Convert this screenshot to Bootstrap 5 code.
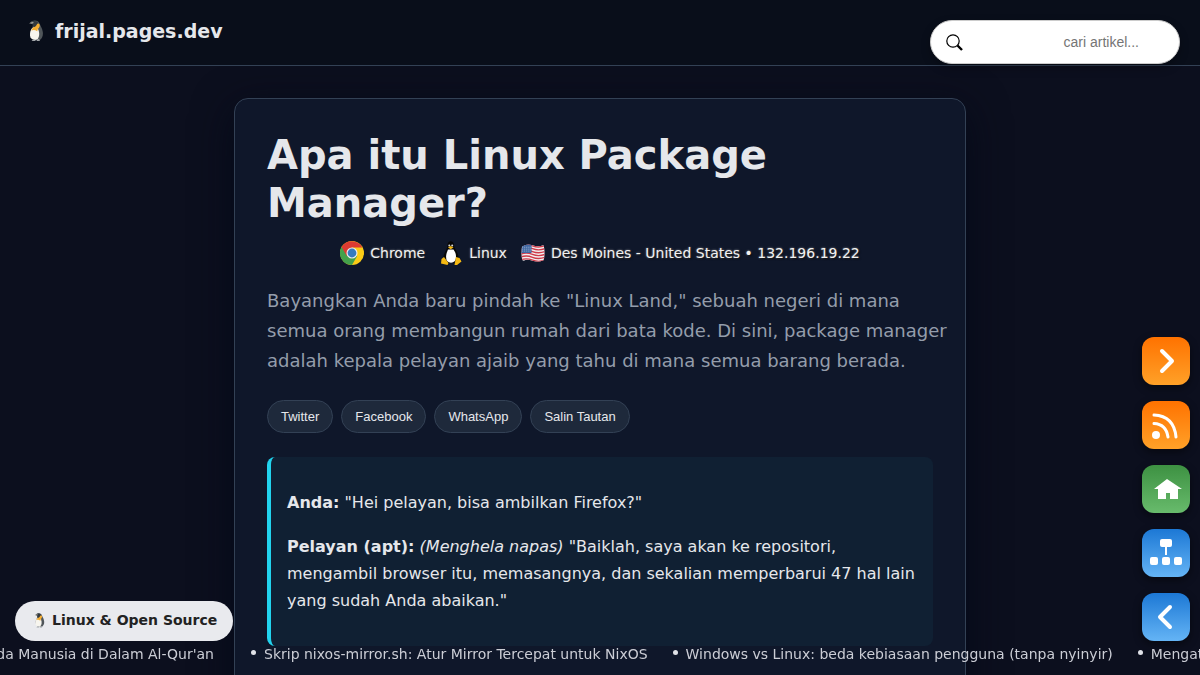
<!DOCTYPE html>
<html lang="id">
<head>
<meta charset="utf-8">
<meta name="viewport" content="width=device-width, initial-scale=1">
<title>Apa itu Linux Package Manager?</title>
<link href="https://cdn.jsdelivr.net/npm/bootstrap@5.3.0/dist/css/bootstrap.min.css" rel="stylesheet">
<style>
html{scrollbar-width:none}
html::-webkit-scrollbar{display:none}
body{background:#0c0f1e;color:#e5e7eb;font:16px/27px "DejaVu Sans",sans-serif;min-height:100vh}
.site-head{min-height:66px;background:#090e1a;border-bottom:1px solid #334155;padding:0 20px 0 24px;position:relative;z-index:2}
.brand-link{font-size:19px;line-height:28px;padding-top:17px;gap:7px;color:#e5e7eb}
.search-box{width:250px;height:44px;margin-top:20px;background:#fff;border:1px solid #ccc;padding:0 26px 0 15px;box-shadow:0 4px 10px #0004}
.search-box input{font:14px "Liberation Sans",sans-serif;text-align:right;color:#222;background:none;outline:0;min-width:0}
.search-box input::placeholder{color:#757575;opacity:1}
.article-box{max-width:732px;margin:32px auto 0;padding:32px 32px 80px;background:#0f172a;border:1px solid #334155;border-radius:14px;box-shadow:0 10px 40px #020817c0}
h1{font-size:40px;line-height:48px;font-weight:700;color:#e5e7eb}
.visitor{font-size:14px;line-height:24px;gap:14px;margin-top:14px;color:#f1f1f1;text-shadow:1px 1px 2px #000,0 0 2px #fffa}
.visitor span{gap:6px}
.intro{font-size:18px;line-height:30px;color:#949dab;margin:21px -16px 24px 0}
.share-btn{font:13px/15px "Liberation Sans",sans-serif;color:#e5e7eb;background:#1e293b;border:1px solid #334155;padding:8px 13px;height:33px}
.dialog{margin:24px 0 0;padding:32px 16px;border-left:4px solid #22d3ee;border-radius:8px;background:#102033}
.dialog p{margin:0 0 17px}
.dialog p:last-child{margin:0}
.side-tools{right:10px;bottom:34px;gap:16px;z-index:5}
.tool{width:48px;height:48px;border-radius:12px;box-shadow:0 3px 8px #0007}
.t-orange{background:linear-gradient(#ff7200,#ffa128)}
.t-green{background:linear-gradient(#3d9142,#68bb6c)}
.t-blue{background:linear-gradient(#1c78d5,#64b4f5)}
.topic{left:15px;bottom:34px;height:40px;padding:0 16px 2px;gap:4px;font-size:14px;font-weight:700;color:#222;background:#e9eaee;z-index:5}
.ticker{bottom:7px;font-size:14px;line-height:28px;gap:25px;z-index:4}
.ticker li{flex:none}
.ticker li:first-child{width:214px;margin-right:12px}
.ticker a{color:#cbcdd5}
.dot{width:5px;height:5px;border-radius:50%;background:#e0e2e8;margin:0 8px 3px 0}
</style>
</head>
<body>
<svg class="d-none" aria-hidden="true">
<symbol id="penguin" viewBox="0 0 16 22"><path d="M2 2.800C4.500-.5 10.500-.3 11.800 4c.8 2.500 2.500 4 3 8 .5 4-.8 6.500-3 8L5 19C1.500 16 1.800 11 4 8 5 6.500 4.800 5 4.800 4Z" fill="#50565a"/><path d="M3.500 9C5 7 8.500 6.500 10 9c2 4 1.300 8.500-.8 10.500-2 1-5.500.3-6.700-2C1.500 15 2 11.500 3.500 9Z" fill="#f7f5ee"/><path d="M4.400 8.500C6 7 6.800 4.500 9.500 3.500c2-.3 2.700 1.500 2 3.200-.5 1.500-1.800 1.800-2.300 4.500C7.500 10 5.500 9.500 3.500 10.500Z" fill="#f6ae32"/><path d="M3.500 2c2.500-2 6.500-1 6.500 1C8.500 4 8.500 6.500 6.500 7 4.800 7.300 5.500 4.500 3.800 3.500Z" fill="#33393e"/><path d="m1 3.200 3.500-1.200 1.500.8-2 .9Z" fill="#a9a7a0"/><path d="m5 19.500-1.500 1.600h4L7.500 19.800Zm4 0-.5 1.600h3.500l-1-2Z" fill="#a2a6a9"/></symbol>
</svg>
<header class="site-head d-flex justify-content-between align-items-start">
<a href="#" class="brand-link d-flex align-items-center fw-bold text-decoration-none"><svg width="24" height="22"><use href="#penguin"/></svg>frijal.pages.dev</a>
<form class="search-box d-flex align-items-center rounded-pill" role="search">
<button type="button" class="border-0 bg-transparent p-0 d-flex" aria-label="Cari"><svg width="17" height="17" viewBox="0 0 17 17" fill="none" stroke="#000"><circle cx="7" cy="7" r="6.200" stroke-width="1.200"/><path d="m11.500 11.500 4.500 4.500" stroke-width="2.400"/></svg></button>
<input type="search" class="border-0 p-0 flex-grow-1" placeholder="cari artikel..." aria-label="Cari artikel">
</form>
</header>
<main>
<article class="article-box">
<h1 class="m-0">Apa itu Linux Package Manager?</h1>
<div class="visitor d-flex justify-content-center flex-wrap">
<span class="d-flex"><svg width="24" height="24" viewBox="0 0 24 24"><circle cx="12" cy="12" r="12" fill="#fbcc16"/><path d="M1.600 6A12 12 0 0 0 12 24l5.200-9L12 12 4 6Z" fill="#43a14b"/><path d="M1.600 6A12 12 0 0 1 22.400 6.500H12L6.800 15Z" fill="#dd3b32"/><circle cx="12" cy="12" r="5.500" fill="#eee"/><circle cx="12" cy="12" r="4.400" fill="#347bc0"/></svg>Chrome</span>
<span class="d-flex"><svg width="24" height="24" viewBox="0 0 24 24"><path d="M8.500 4c0-5 6.500-5 6.500 0 0 4 4.500 7 4.500 13 0 3-3 5-7.500 5s-7.500-2-7.500-5C4.500 11 8.500 9 8.500 4Z" fill="#080808"/><path d="M9 8.500h5.500C17 12 17.500 15 16.500 19c-2 3.500-7 3.500-9 0-1-4 0-7 1.500-10.500Z" fill="#fff"/><circle cx="10.300" cy="4.500" r="1" fill="#ddd"/><circle cx="13.200" cy="4.500" r="1" fill="#ddd"/><path d="m9 6.500 2.700-1.500 2.800 1.500-2.800 1.800Z" fill="#f5b913"/><path d="M2.500 18 5 16l4.500 6-1 2-6.500-1.500ZM17 16l3.500 1 2 3.500-4.500 3.500h-2.500Z" fill="#f5b913"/></svg>Linux</span>
<span class="d-flex"><svg width="24" height="24" viewBox="0 0 25 24"><clipPath id="wave"><path d="M2 5Q6 2 12 4T23 4Q24 4 24 6 25 12 24 18 24 20 22 20 18 22 12 20T3 20Q1 20 1 18 0 12 1 6 1 5 2 5Z"/></clipPath><g clip-path="url(#wave)"><path fill="#f3eff0" d="M0 0h25v24H0z"/><path d="M0 4Q6 2 12 4.500T25 4.500M0 7Q6 5 12 7.500T25 7.500M0 10Q6 8 12 10.500T25 10.500M0 13Q6 11 12 13.500T25 13.500M0 16Q6 14 12 16.500T25 16.500M0 19Q6 17 12 19.500T25 19.500" fill="none" stroke="#cf3b4b" stroke-width="1.500"/><path fill="#4168a2" d="M0 3h11v9H0z"/><path d="M1 6h9M1 8h9M1 10h9" stroke="#c5d2e4" stroke-width=".7" stroke-dasharray="1 1"/></g></svg>Des Moines - United States • 132.196.19.22</span>
</div>
<p class="intro">Bayangkan Anda baru pindah ke "Linux Land," sebuah negeri di mana semua orang membangun rumah dari bata kode. Di sini, package manager adalah kepala pelayan ajaib yang tahu di mana semua barang berada.</p>
<div class="d-flex flex-wrap gap-2">
<button type="button" class="share-btn rounded-pill">Twitter</button>
<button type="button" class="share-btn rounded-pill">Facebook</button>
<button type="button" class="share-btn rounded-pill">WhatsApp</button>
<button type="button" class="share-btn rounded-pill">Salin Tautan</button>
</div>
<blockquote class="dialog">
<p><strong>Anda:</strong> "Hei pelayan, bisa ambilkan Firefox?"</p>
<p><strong>Pelayan (apt):</strong> <em>(Menghela napas)</em> "Baiklah, saya akan ke repositori, mengambil browser itu, memasangnya, dan sekalian memperbarui 47 hal lain yang sudah Anda abaikan."</p>
</blockquote>
</article>
</main>
<nav class="side-tools position-fixed d-flex flex-column" aria-label="Pintasan">
<a href="#" class="tool t-orange" aria-label="Berikutnya"><svg width="48" height="48" fill="none" stroke="#fff" stroke-width="4" stroke-linecap="round" stroke-linejoin="round"><path d="m20 14 10 10-10 10"/></svg></a>
<a href="#" class="tool t-orange" aria-label="RSS"><svg width="48" height="48" fill="none" stroke="#fff" stroke-width="3" stroke-linecap="round"><circle cx="14" cy="34" r="4" fill="#fff" stroke="none"/><path d="M12 22.500Q24 23 26 36M12 14Q32 15 34 36"/></svg></a>
<a href="#" class="tool t-green" aria-label="Beranda"><svg width="48" height="48" fill="#fff"><path d="m25 14 15 10h-4v10h-8v-6h-4v6h-8V24h-4Z"/></svg></a>
<a href="#" class="tool t-blue" aria-label="Peta situs"><svg width="48" height="48" fill="#fff"><rect x="18" y="10" width="12" height="8" rx="2"/><path d="M23 17h2v9h-2z"/><rect x="8" y="28" width="8" height="8" rx="2"/><rect x="20" y="28" width="8" height="8" rx="2"/><rect x="32" y="28" width="8" height="8" rx="2"/></svg></a>
<a href="#" class="tool t-blue" aria-label="Sebelumnya"><svg width="48" height="48" fill="none" stroke="#fff" stroke-width="4" stroke-linecap="round" stroke-linejoin="round"><path d="M28 14 18 24l10 10"/></svg></a>
</nav>
<a href="#" class="topic position-fixed rounded-pill d-flex align-items-center text-decoration-none"><svg width="17" height="15"><use href="#penguin"/></svg>Linux &amp; Open Source</a>
<ul class="ticker position-fixed start-0 end-0 m-0 p-0 list-unstyled d-flex overflow-hidden text-nowrap">
<li class="d-flex justify-content-end"><a href="#" class="text-decoration-none">pada Manusia di Dalam Al-Qur'an</a></li>
<li class="d-flex align-items-center"><span class="dot"></span><a href="#" class="text-decoration-none">Skrip nixos-mirror.sh: Atur Mirror Tercepat untuk NixOS</a></li>
<li class="d-flex align-items-center"><span class="dot"></span><a href="#" class="text-decoration-none">Windows vs Linux: beda kebiasaan pengguna (tanpa nyinyir)</a></li>
<li class="d-flex align-items-center"><span class="dot"></span><a href="#" class="text-decoration-none">Mengatur</a></li>
</ul>
<script src="https://cdn.jsdelivr.net/npm/bootstrap@5.3.0/dist/js/bootstrap.bundle.min.js"></script>
</body>
</html>
